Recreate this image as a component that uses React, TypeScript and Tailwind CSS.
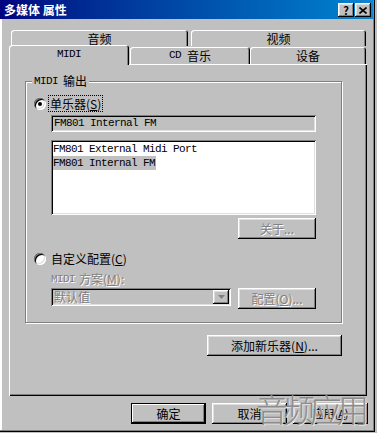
import type { ReactNode } from "react";
import clsx from "clsx";

const raised =
  "bg-[#c0c0c0] shadow-[inset_-1px_-1px_0_#000,inset_1px_1px_0_#fff,inset_-2px_-2px_0_#808080,inset_2px_2px_0_#dfdfdf]";
const sunken =
  "shadow-[inset_1px_1px_0_#808080,inset_-1px_-1px_0_#fff,inset_2px_2px_0_#000,inset_-2px_-2px_0_#dfdfdf]";
const mono = "font-['Liberation_Mono',monospace] text-[11px] tracking-[-0.6px]";
const dim = "text-[#808080] [text-shadow:1px_1px_0_#fff]";
const tab =
  "flex items-center justify-center rounded-t-[3px] bg-[#c0c0c0] shadow-[inset_1px_1px_0_#fff,inset_-1px_0_0_#000,inset_-2px_0_0_#808080]";

function Btn({
  className,
  children,
  disabled,
}: {
  className?: string;
  children: ReactNode;
  disabled?: boolean;
}) {
  return (
    <div
      className={clsx(
        "flex h-[21px] shrink-0 items-center justify-center leading-none",
        raised,
        disabled && dim,
        className
      )}
    >
      {children}
    </div>
  );
}

function Radio({ checked }: { checked?: boolean }) {
  return (
    <div className="flex size-[12px] shrink-0 items-center justify-center rounded-full bg-white shadow-[inset_1px_1px_0_#808080,inset_-1px_-1px_0_#fff,inset_2px_2px_0_#000,inset_-2px_-2px_0_#dfdfdf]">
      {checked && <div className="size-[4px] rounded-full bg-black" />}
    </div>
  );
}

function TitleBtn({ children }: { children: ReactNode }) {
  return (
    <div className={clsx("flex h-[14px] w-[16px] items-center justify-center text-[11px] font-bold leading-none text-black", raised)}>
      {children}
    </div>
  );
}

export default function App() {
  return (
    <div className="relative h-[433px] w-[377px] overflow-hidden bg-[#c0c0c0] font-['Noto_Sans_CJK_SC','Noto_Sans',sans-serif] text-[12px] text-black">
      <div className="flex h-[432px] w-[375px] flex-col shadow-[inset_-1px_-1px_0_#000,inset_-2px_-2px_0_#808080,inset_2px_0_0_#fff]">
        {/* title bar */}
        <div className="flex h-[19px] w-[373px] shrink-0 items-center justify-between bg-linear-to-r from-[#000080] to-[#1084d0] pl-[4px] pr-[2px]">
          <span className="text-[12px] font-bold leading-none text-white">多媒体 属性</span>
          <div className="flex gap-[1px] pt-[1px]">
            <TitleBtn>?</TitleBtn>
            <TitleBtn>
              <svg width="8" height="7" viewBox="0 0 8 7">
                <path d="M0.5 0.5 L7.5 6.5 M7.5 0.5 L0.5 6.5" stroke="#000" strokeWidth="1.6" />
              </svg>
            </TitleBtn>
          </div>
        </div>

        {/* tabs */}
        <div className="mt-[11px] pl-[9px]">
          <div className="ml-[2px] flex h-[15px] gap-[3px]">
            <div className={clsx(tab, "h-[16px] w-[177px] pt-[1px]")}>音频</div>
            <div className={clsx(tab, "h-[16px] w-[175px] pt-[1px]")}>视频</div>
          </div>
          <div className="flex h-[19px] items-end">
            <div className={clsx(tab, "relative z-10 -mb-px h-[20px] w-[120px] pb-[1px]")}>
              <span className={mono}>MIDI</span>
            </div>
            <div className={clsx(tab, "ml-[1px] h-[17px] w-[120px] gap-[6px]")}>
              <span className={mono}>CD</span>
              <span>音乐</span>
            </div>
            <div className={clsx(tab, "h-[17px] w-[116px]")}>设备</div>
          </div>

          {/* panel */}
          <div className="flex h-[332px] w-[358px] flex-col pl-[16px] pt-[17px] shadow-[inset_1px_1px_0_#fff,inset_-1px_-1px_0_#000,inset_-2px_-2px_0_#808080]">
            <div className="relative flex h-[242px] w-[317px] flex-col border border-[#808080] shadow-[inset_1px_1px_0_#fff,1px_1px_0_#fff]">
              <div className="absolute -top-[8px] left-[6px] flex items-center gap-[5px] bg-[#c0c0c0] px-[2px] leading-[14px]">
                <span className={mono}>MIDI</span>
                <span>输出</span>
              </div>

              <div className="mt-[14px] flex h-[15px] items-center pl-[8px]">
                <Radio checked />
                <div className="ml-[3px] flex h-[15px] items-center px-[1px] leading-none outline outline-1 outline-dotted outline-black">
                  单乐器(<u>S</u>)
                </div>
              </div>

              <div className={clsx("ml-[25px] mt-[4px] flex h-[17px] w-[265px] items-center pl-[3px]", sunken)}>
                <span className={mono}>FM801 Internal FM</span>
              </div>

              <div className={clsx("ml-[25px] mt-[8px] flex h-[75px] w-[265px] flex-col bg-white px-[2px] pt-[2px]", sunken)}>
                <div className={clsx("flex h-[14px] items-center", mono)}>FM801 External Midi Port</div>
                <div className={clsx("flex h-[14px] w-fit items-center bg-[#c0c0c0] pr-[1px]", mono)}>FM801 Internal FM</div>
              </div>

              <Btn disabled className="ml-[212px] mt-[3px] w-[78px]">
                关于...
              </Btn>

              <div className="mt-[12px] flex h-[15px] items-center pl-[8px]">
                <Radio />
                <div className="ml-[5px] leading-none">
                  自定义配置(<u>C</u>)
                </div>
              </div>

              <div className={clsx("ml-[25px] mt-[6px] flex h-[14px] items-center gap-[4px] leading-none", dim)}>
                <span className={mono}>MIDI</span>
                <span>
                  方案(<u>M</u>):
                </span>
              </div>

              <div className="ml-[25px] mt-[2px] flex items-start gap-[7px]">
                <div className={clsx("flex h-[18px] w-[180px] items-center justify-between pl-[3px] pr-[2px]", sunken)}>
                  <span className={clsx("leading-none", dim)}>默认值</span>
                  <div className={clsx("flex h-[14px] w-[16px] items-center justify-center", raised)}>
                    <svg width="7" height="4" viewBox="0 0 7 4">
                      <path d="M0 0 H7 L3.5 4 Z" fill="#808080" />
                    </svg>
                  </div>
                </div>
                <Btn disabled className="h-[19px] w-[78px]">
                  配置(<u>O</u>)...
                </Btn>
              </div>
            </div>

            <Btn className="ml-[182px] mt-[12px] w-[135px]">
              添加新乐器(<u>N</u>)...
            </Btn>
          </div>
        </div>

        {/* dialog buttons */}
        <div className="ml-[131px] mt-[7px] flex gap-[6px]">
          <Btn className="w-[75px] shadow-[inset_0_0_0_1px_#000,inset_-2px_-2px_0_#000,inset_2px_2px_0_#fff,inset_-3px_-3px_0_#808080]">确定</Btn>
          <Btn className="w-[75px]">取消</Btn>
          <Btn className="w-[75px] text-[11px]">
            应用(<u>A</u>)
          </Btn>
        </div>
      </div>

      {/* watermark */}
      <div className="pointer-events-none absolute left-[256px] top-[392px] flex text-[32px] font-light leading-none tracking-[-5px] text-[#8c8c8c] [text-shadow:1px_1px_0_#e0e0e0]">
        <span>音</span>
        <span>频</span>
        <span>应</span>
        <span>用</span>
      </div>
    </div>
  );
}
